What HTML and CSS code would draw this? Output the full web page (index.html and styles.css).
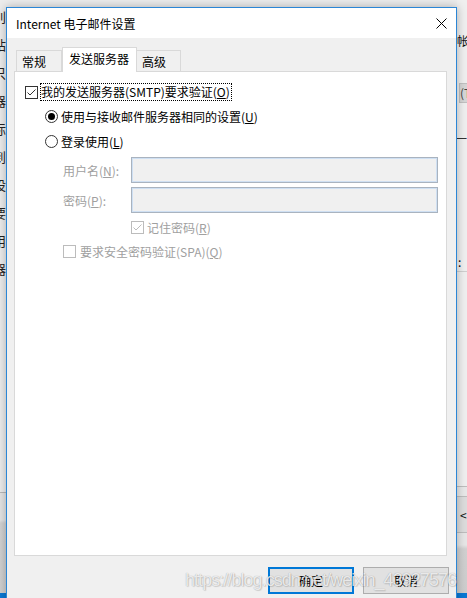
FILE: index.html
```html
<!DOCTYPE html>
<html lang="zh-CN">
<head>
<meta charset="utf-8">
<title>Internet 电子邮件设置</title>
<link rel="stylesheet" href="styles.css">
</head>
<body>
<div class="desktop">
  <div class="desk-main">
    <div class="bg-left">
      <span>刖</span><span>站</span><span>只</span><span>器</span><span>际</span><span>到</span><span>设</span><span>要</span><span>用</span><span>器</span>
      <div class="bg-left-box"></div>
      <div class="bg-left-foot"></div>
    </div>
    <div class="bg-mid"></div>
    <div class="bg-right">
      <span class="r-char">帐</span>
      <div class="r-btn">(T</div>
      <span class="r-step">一步</span>
      <span class="r-colon">:</span>
      <div class="r-line"></div>
      <div class="r-foot">
        <div class="r-bar"></div>
        <div class="r-nav">&lt;</div>
        <div class="r-dark"></div>
      </div>
    </div>
  </div>
  <div class="taskbar"></div>
</div>

<div class="dialog">
  <div class="titlebar">
    <span class="title">Internet 电子邮件设置</span>
    <svg class="close" width="11" height="11" viewBox="0 0 11 11"><path d="M0.5 0.5 L10.5 10.5 M10.5 0.5 L0.5 10.5" stroke="#000" stroke-width="1" fill="none"/></svg>
  </div>
  <div class="body">
    <div class="tabs">
      <div class="tab tab-first">常规</div>
      <div class="tab tab-active">发送服务器</div>
      <div class="tab tab-last">高级</div>
    </div>
    <div class="panel">
      <div class="row r-main">
        <span class="cb"><svg width="11" height="11" viewBox="0 0 11 11"><path d="M1.5 5.5 L4 8 L9.5 2.5" stroke="#333" stroke-width="1" fill="none"/></svg></span>
        <span class="focus">我的发送服务器(SMTP)要求验证(<u>O</u>)</span>
      </div>
      <div class="row r-radio1">
        <span class="radio on"><span class="dot"></span></span>
        <span class="lbl">使用与接收邮件服务器相同的设置(<u>U</u>)</span>
      </div>
      <div class="row r-radio2">
        <span class="radio"></span>
        <span class="lbl">登录使用(<u>L</u>)</span>
      </div>
      <div class="row r-field1">
        <span class="flabel">用户名(<u>N</u>):</span>
        <span class="input"></span>
      </div>
      <div class="row r-field2">
        <span class="flabel">密码(<u>P</u>):</span>
        <span class="input"></span>
      </div>
      <div class="row r-remember">
        <span class="cb dis"><svg width="11" height="11" viewBox="0 0 11 11"><path d="M1.5 5.5 L4 8 L9.5 2.5" stroke="#bcbcbc" stroke-width="1" fill="none"/></svg></span>
        <span class="lbl dis-t">记住密码(<u>R</u>)</span>
      </div>
      <div class="row r-spa">
        <span class="cb dis"></span>
        <span class="lbl dis-t">要求安全密码验证(SPA)(<u>Q</u>)</span>
      </div>
    </div>
    <div class="buttons">
      <button class="btn btn-default">确定</button>
      <button class="btn">取消</button>
    </div>
  </div>
</div>
<div class="watermark">https://blog.csdn.net/weixin_43927576</div>
</body>
</html>
```
FILE: styles.css
```css
* { box-sizing: border-box; }

body {
  margin: 0;
  width: 467px;
  height: 598px;
  overflow: hidden;
  position: relative;
  background: #ececec;
  font-family: "Noto Sans CJK SC", "Microsoft YaHei", sans-serif;
  font-size: 12px;
  color: #000;
}

/* background window */
.desktop {
  display: flex;
  flex-direction: column;
  height: 598px;
}
.desk-main {
  display: flex;
  height: 593px;
}
.taskbar {
  height: 5px;
  background: #0a78d4;
}
.bg-left {
  width: 6px;
  overflow: hidden;
  background: #ececec;
  display: flex;
  flex-direction: column;
  padding-top: 3px;
}
.bg-left span {
  display: block;
  height: 28px;
  line-height: 28px;
  margin-left: -7px;
  white-space: nowrap;
  color: #222;
  font-size: 13px;
}
.bg-left-box {
  width: 5px;
  height: 13px;
  margin-top: 57px;
  margin-left: -8px;
  border: 1px solid #333;
}
.bg-left-foot {
  margin-top: 139px;
  border-top: 1px solid #b8b8b8;
  flex: 1;
  background: linear-gradient(#e4e4e4 0, #e4e4e4 27px, #d2d2d2 30px, #cfcfcf 100%);
}
.bg-mid { flex: 1; }
.bg-right {
  width: 10px;
  overflow: hidden;
  background: #efefef;
  display: flex;
  flex-direction: column;
}
.r-char {
  display: block;
  margin-top: 33px;
  height: 16px;
  line-height: 16px;
  white-space: nowrap;
  color: #111;
}
.r-btn {
  margin-top: 34px;
  height: 20px;
  margin-left: 2px;
  width: 20px;
  background: #d6d6d6;
  border: 1px solid #c0c0c0;
  color: #444;
  line-height: 18px;
  white-space: nowrap;
}
.r-step {
  display: block;
  margin-top: 29px;
  height: 14px;
  line-height: 14px;
  white-space: nowrap;
  color: #333;
  margin-left: -2px;
}
.r-colon {
  display: block;
  margin-top: 110px;
  height: 12px;
  line-height: 12px;
  margin-left: 1px;
}
.r-line {
  height: 1px;
  background: #cfcfcf;
  margin-top: 3px;
}
.r-foot {
  margin-top: 214px;
  flex: 1;
  display: flex;
  flex-direction: column;
  border-top: 1px solid #bdbdbd;
  background: #e8e8e8;
}
.r-bar {
  height: 10px;
  border-bottom: 1px solid #bdbdbd;
}
.r-nav {
  height: 36px;
  line-height: 36px;
  padding-left: 3px;
  background: #dcdcdc;
  border-bottom: 1px solid #bdbdbd;
  color: #111;
}
.r-dark {
  flex: 1;
  background: linear-gradient(#e6e6e6 0, #e6e6e6 12px, #d0d0d0 16px, #cdcdcd 100%);
}

/* dialog window */
.dialog {
  position: absolute;
  left: 6px;
  top: 7px;
  width: 451px;
  height: 620px;
  border: 1px solid #2b86d6;
  background: #f0f0f0;
  box-shadow: 0 0 9px rgba(0, 0, 0, 0.28);
  display: flex;
  flex-direction: column;
}
.titlebar {
  height: 30px;
  flex: none;
  background: #fff;
  display: flex;
  align-items: center;
  justify-content: space-between;
  padding: 0 9px 0 9px;
}
.title {
  font-size: 12px;
  line-height: 16px;
  margin-top: 1px;
}
.close { display: block; margin-top: 0; }

.body {
  padding: 9px 9px 0 7px;
  display: flex;
  flex-direction: column;
}

.tabs {
  display: flex;
  align-items: flex-end;
  height: 24px;
  padding-left: 2px;
}
.tab {
  height: 21px;
  border: 1px solid #d9d9d9;
  border-bottom: none;
  background: #f0f0f0;
  line-height: 21px;
  white-space: nowrap;
}
.tab-first { width: 46px; padding-left: 5px; }
.tab-active {
  width: 75px;
  height: 25px;
  margin-bottom: -1px;
  background: #fff;
  position: relative;
  z-index: 1;
  padding-left: 6px;
  line-height: 22px;
}
.tab-last { width: 44px; border-left: none; padding-left: 5px; }

.panel {
  height: 485px;
  border: 1px solid #d9d9d9;
  background: #fff;
  padding-left: 10px;
  display: flex;
  flex-direction: column;
}

.row {
  display: flex;
  align-items: center;
  white-space: nowrap;
}
u { text-underline-offset: 1px; text-decoration-thickness: 1px; }

.cb {
  width: 13px;
  height: 13px;
  flex: none;
  border: 1px solid #333;
  background: #fff;
  display: flex;
  align-items: center;
  justify-content: center;
}
.cb.dis { border-color: #bcbcbc; }
.cb svg { display: block; }

.r-main { margin-top: 11px; height: 18px; }
.focus {
  margin-left: 2px;
  height: 18px;
  line-height: 16px;
  border: 1px dotted #000;
  padding: 0 1px 0 0;
}

.radio {
  width: 13px;
  height: 13px;
  flex: none;
  border: 1px solid #333;
  border-radius: 50%;
  background: #fff;
  display: flex;
  align-items: center;
  justify-content: center;
}
.radio .dot {
  width: 7px;
  height: 7px;
  border-radius: 50%;
  background: #000;
}
.r-radio1 { margin-top: 7px; height: 16px; padding-left: 20px; }
.r-radio2 { margin-top: 9px; height: 16px; padding-left: 20px; }
.r-radio1 .lbl, .r-radio2 .lbl { margin-left: 3px; }

.r-field1 { margin-top: 8px; height: 26px; padding-left: 38px; }
.r-field2 { margin-top: 4px; height: 26px; padding-left: 38px; }
.flabel {
  width: 68px;
  color: #a0a0a0;
}
.input {
  width: 307px;
  height: 26px;
  background: #f0f0f0;
  border: 1px solid #a9b3bf;
  box-shadow: inset 0 0 0 1px #cfe0f3;
}

.r-remember { margin-top: 6px; height: 16px; padding-left: 106px; }
.r-remember .lbl { margin-left: 3px; }
.r-spa { margin-top: 8px; height: 16px; padding-left: 38px; }
.r-spa .lbl { margin-left: 4px; }
.dis-t { color: #a0a0a0; }

.buttons {
  display: flex;
  justify-content: flex-end;
  gap: 9px;
  margin-top: 11px;
  margin-right: -2px;
}
.btn {
  width: 86px;
  height: 27px;
  border: 1px solid #adadad;
  background: #e1e1e1;
  font-family: "Noto Sans CJK SC", "Microsoft YaHei", sans-serif;
  font-size: 12px;
  color: #000;
  padding: 0;
  margin: 0;
}
.btn-default { border: 2px solid #0078d7; }

.watermark {
  position: absolute;
  left: 185px;
  top: 568px;
  font-family: "Liberation Sans", Arial, sans-serif;
  font-size: 18px;
  letter-spacing: -0.95px;
  line-height: 24px;
  color: rgba(255, 255, 255, 0.8);
  text-shadow: 0 0 1px rgba(0, 0, 0, 0.35), 1px 1px 1px rgba(0, 0, 0, 0.12);
  white-space: nowrap;
  pointer-events: none;
}
```
